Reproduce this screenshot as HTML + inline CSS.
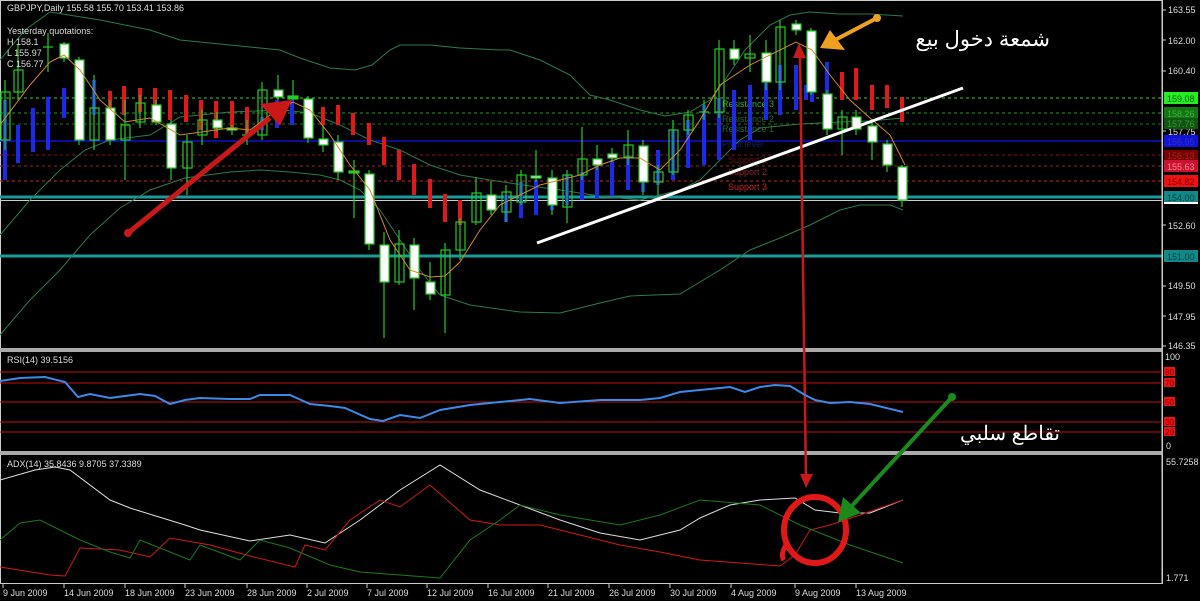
<!DOCTYPE html>
<html><head><meta charset="utf-8"><style>
html,body{margin:0;padding:0;background:#000;}
svg{display:block}
text{font-family:"Liberation Sans",sans-serif;font-size:9px;fill:#ddd}
</style></head><body>
<svg width="1200" height="601" viewBox="0 0 1200 601" xmlns="http://www.w3.org/2000/svg">
<rect width="1200" height="601" fill="#000"/>
<rect x="0.5" y="0.5" width="1162" height="583" fill="none" stroke="#ccc" stroke-width="1"/>
<rect x="0" y="348" width="1163" height="4" fill="#aaa"/>
<rect x="0" y="451" width="1163" height="4" fill="#aaa"/>

<line x1="0" y1="98" x2="1162" y2="98" stroke="#3c3" stroke-dasharray="3,3"/>
<line x1="0" y1="113" x2="1162" y2="113" stroke="#292" stroke-dasharray="3,3"/>
<line x1="0" y1="124" x2="1162" y2="124" stroke="#171" stroke-dasharray="3,3"/>
<line x1="0" y1="141" x2="1162" y2="141" stroke="#11c" stroke-width="1.5"/>
<line x1="0" y1="155" x2="1162" y2="155" stroke="#811" stroke-dasharray="3,3"/>
<line x1="0" y1="166" x2="1162" y2="166" stroke="#922" stroke-dasharray="3,3"/>
<line x1="0" y1="181" x2="1162" y2="181" stroke="#c22" stroke-dasharray="3,3"/>
<line x1="0" y1="197" x2="1162" y2="197" stroke="#1a9a9a" stroke-width="3"/>
<line x1="0" y1="200.5" x2="1162" y2="200.5" stroke="#ccc" stroke-width="1"/>
<line x1="0" y1="256" x2="1162" y2="256" stroke="#1a9a9a" stroke-width="3"/>
<text x="722" y="107" style="fill:#3a3;font-size:9px">Resistance 3</text>
<text x="722" y="122" style="fill:#262;font-size:9px">Resistance 2</text>
<text x="722" y="132" style="fill:#263;font-size:9px">Resistance 1</text>
<text x="722" y="147" style="fill:#126;font-size:9px">Pivot level</text>
<text x="728" y="163" style="fill:#611;font-size:9px">Support 1</text>
<text x="728" y="175" style="fill:#922;font-size:9px">Support 2</text>
<text x="728" y="190" style="fill:#c22;font-size:9px">Support 3</text>

<polyline fill="none" stroke="#2a7a4a" stroke-width="1" points="0,60 25,30 50,12 100,20 150,30 180,40 230,45 280,50 300,58 330,68 355,70 372,65 390,50 400,45 430,45 460,48 500,50 510,50 540,60 570,75 590,95 610,100 640,110 665,116 690,112 710,100 725,80 745,50 770,25 790,15 810,12 840,14 870,14 903,16"/>
<polyline fill="none" stroke="#2a7a4a" stroke-width="1" points="0,235 30,200 60,170 85,150 110,140 150,135 180,117 230,112 283,110 310,113 340,125 370,140 400,150 430,165 460,175 490,180 530,186 560,190 600,196 640,200 680,190 700,180 720,160 740,140 760,128 800,124 840,122 870,121 903,118"/>
<polyline fill="none" stroke="#2a7a4a" stroke-width="1" points="0,335 30,300 60,270 90,235 120,208 150,190 185,178 230,172 260,170 290,172 320,175 340,180 360,190 380,210 400,240 420,270 440,295 470,305 520,312 560,313 600,303 630,296 680,294 720,270 750,250 780,238 810,225 840,210 860,205 890,205 903,210"/>

<g stroke-width="4">
<g stroke="#1a2ae8">
<line x1="5" y1="100" x2="5" y2="180"/><line x1="18" y1="125" x2="18" y2="163"/><line x1="33" y1="108" x2="33" y2="152"/><line x1="48" y1="97" x2="48" y2="150"/><line x1="64" y1="88" x2="64" y2="118"/><line x1="79" y1="80" x2="79" y2="125"/><line x1="94" y1="80" x2="94" y2="115"/><line x1="262" y1="117" x2="262" y2="130"/><line x1="277" y1="100" x2="277" y2="128"/><line x1="292" y1="100" x2="292" y2="125"/><line x1="308" y1="100" x2="308" y2="122"/>
<line x1="506" y1="195" x2="506" y2="222"/><line x1="521" y1="182" x2="521" y2="218"/><line x1="536" y1="180" x2="536" y2="215"/><line x1="552" y1="180" x2="552" y2="210"/><line x1="567" y1="175" x2="567" y2="205"/><line x1="582" y1="172" x2="582" y2="200"/><line x1="597" y1="165" x2="597" y2="198"/><line x1="612" y1="160" x2="612" y2="196"/><line x1="628" y1="155" x2="628" y2="190"/><line x1="643" y1="150" x2="643" y2="192"/><line x1="658" y1="150" x2="658" y2="185"/><line x1="673" y1="130" x2="673" y2="180"/><line x1="688" y1="120" x2="688" y2="168"/><line x1="704" y1="105" x2="704" y2="165"/><line x1="719" y1="98" x2="719" y2="160"/><line x1="734" y1="90" x2="734" y2="150"/><line x1="750" y1="85" x2="750" y2="140"/><line x1="766" y1="82" x2="766" y2="120"/><line x1="780" y1="65" x2="780" y2="115"/><line x1="796" y1="65" x2="796" y2="110"/><line x1="806" y1="85" x2="806" y2="100"/><line x1="812" y1="88" x2="812" y2="102"/><line x1="827" y1="62" x2="827" y2="97"/>
</g>
<g stroke="#e01818">
<line x1="110" y1="91" x2="110" y2="110"/><line x1="124" y1="86" x2="124" y2="115"/><line x1="140" y1="88" x2="140" y2="112"/><line x1="155" y1="88" x2="155" y2="115"/><line x1="170" y1="90" x2="170" y2="120"/><line x1="186" y1="95" x2="186" y2="122"/><line x1="201" y1="100" x2="201" y2="130"/><line x1="216" y1="101" x2="216" y2="138"/><line x1="232" y1="101" x2="232" y2="128"/><line x1="247" y1="107" x2="247" y2="138"/>
<line x1="323" y1="107" x2="323" y2="125"/><line x1="338" y1="105" x2="338" y2="125"/><line x1="353" y1="113" x2="353" y2="135"/><line x1="369" y1="123" x2="369" y2="145"/><line x1="384" y1="137" x2="384" y2="165"/><line x1="399" y1="150" x2="399" y2="180"/><line x1="414" y1="164" x2="414" y2="195"/><line x1="430" y1="179" x2="430" y2="208"/><line x1="445" y1="194" x2="445" y2="222"/><line x1="460" y1="200" x2="460" y2="225"/>
<line x1="842" y1="72" x2="842" y2="100"/><line x1="856" y1="68" x2="856" y2="100"/><line x1="872" y1="85" x2="872" y2="110"/><line x1="887" y1="85" x2="887" y2="108"/><line x1="902" y1="97" x2="902" y2="122"/>
</g>
</g>

<g stroke="#2c2" stroke-width="1.2" fill="none">
<line x1="5" y1="80" x2="5" y2="150"/><rect x="1" y="92" width="9" height="48"/>
<line x1="18" y1="45" x2="18" y2="100"/><rect x="14" y="70" width="9" height="22"/>
<line x1="48" y1="33" x2="48" y2="72"/><line x1="43" y1="47" x2="53" y2="47"/>
<line x1="94" y1="75" x2="94" y2="150"/><rect x="90" y="108" width="9" height="32"/>
<line x1="125" y1="100" x2="125" y2="180"/><rect x="121" y="125" width="9" height="15"/>
<line x1="140" y1="95" x2="140" y2="128"/><rect x="136" y="103" width="9" height="19"/>
<line x1="187" y1="135" x2="187" y2="195"/><rect x="183" y="142" width="9" height="26"/>
<line x1="202" y1="110" x2="202" y2="145"/><rect x="198" y="120" width="9" height="15"/>
<line x1="247" y1="120" x2="247" y2="145"/><line x1="242" y1="135" x2="252" y2="135"/>
<line x1="262" y1="82" x2="262" y2="140"/><rect x="258" y="90" width="9" height="45"/>
<line x1="293" y1="80" x2="293" y2="100"/><rect x="288" y="96" width="10" height="3" fill="#2c2"/>
<line x1="354" y1="160" x2="354" y2="218"/><rect x="349" y="171" width="10" height="2" fill="#2c2"/>
<line x1="399" y1="230" x2="399" y2="285"/><rect x="395" y="244" width="9" height="38"/>
<line x1="445" y1="243" x2="445" y2="333"/><rect x="441" y="250" width="9" height="45"/>
<line x1="460" y1="218" x2="460" y2="260"/><rect x="456" y="222" width="9" height="28"/>
<line x1="476" y1="177" x2="476" y2="225"/><rect x="472" y="193" width="9" height="29"/>
<line x1="506" y1="185" x2="506" y2="222"/><rect x="502" y="192" width="9" height="20"/>
<line x1="521" y1="170" x2="521" y2="205"/><rect x="517" y="175" width="9" height="27"/>
<line x1="567" y1="170" x2="567" y2="223"/><rect x="563" y="175" width="9" height="32"/>
<line x1="582" y1="127" x2="582" y2="180"/><rect x="578" y="159" width="9" height="16"/>
<line x1="628" y1="130" x2="628" y2="165"/><rect x="624" y="145" width="9" height="12"/>
<line x1="658" y1="165" x2="658" y2="195"/><rect x="654" y="172" width="9" height="10"/>
<line x1="673" y1="120" x2="673" y2="175"/><rect x="669" y="130" width="9" height="42"/>
<line x1="688" y1="110" x2="688" y2="135"/><rect x="684" y="115" width="9" height="15"/>
<line x1="704" y1="100" x2="704" y2="120"/><line x1="699" y1="112" x2="709" y2="112"/>
<line x1="719" y1="40" x2="719" y2="118"/><rect x="715" y="49" width="9" height="63"/>
<line x1="750" y1="35" x2="750" y2="72"/><rect x="745" y="54" width="10" height="4"/>
<line x1="780" y1="20" x2="780" y2="90"/><rect x="776" y="27" width="9" height="55"/>
<line x1="842" y1="110" x2="842" y2="155"/><rect x="838" y="117" width="9" height="12"/>
</g>
<g stroke="#2c2" stroke-width="1.2" fill="#fff">
<line x1="64" y1="42" x2="64" y2="62"/><rect x="60" y="44" width="9" height="14"/>
<line x1="79" y1="57" x2="79" y2="145"/><rect x="75" y="60" width="9" height="80"/>
<line x1="110" y1="100" x2="110" y2="145"/><rect x="106" y="108" width="9" height="32"/>
<line x1="156" y1="100" x2="156" y2="125"/><rect x="152" y="105" width="9" height="17"/>
<line x1="171" y1="120" x2="171" y2="180"/><rect x="167" y="124" width="9" height="44"/>
<line x1="217" y1="112" x2="217" y2="132"/><rect x="213" y="120" width="9" height="8"/>
<line x1="232" y1="125" x2="232" y2="135"/><rect x="227" y="128" width="10" height="2"/>
<line x1="278" y1="75" x2="278" y2="100"/><rect x="274" y="90" width="9" height="7"/>
<line x1="308" y1="96" x2="308" y2="143"/><rect x="304" y="99" width="9" height="39"/>
<line x1="323" y1="125" x2="323" y2="152"/><rect x="319" y="139" width="9" height="6"/>
<line x1="338" y1="135" x2="338" y2="180"/><rect x="334" y="142" width="9" height="30"/>
<line x1="369" y1="170" x2="369" y2="250"/><rect x="365" y="174" width="9" height="70"/>
<line x1="384" y1="232" x2="384" y2="338"/><rect x="380" y="245" width="9" height="37"/>
<line x1="414" y1="238" x2="414" y2="310"/><rect x="410" y="245" width="9" height="33"/>
<line x1="430" y1="262" x2="430" y2="300"/><rect x="426" y="282" width="9" height="12"/>
<line x1="491" y1="181" x2="491" y2="215"/><rect x="487" y="195" width="9" height="15"/>
<line x1="536" y1="150" x2="536" y2="182"/><rect x="531" y="176" width="10" height="2"/>
<line x1="552" y1="170" x2="552" y2="215"/><rect x="548" y="178" width="9" height="27"/>
<line x1="597" y1="145" x2="597" y2="170"/><rect x="593" y="159" width="9" height="6"/>
<line x1="612" y1="148" x2="612" y2="162"/><rect x="608" y="154" width="9" height="4"/>
<line x1="643" y1="140" x2="643" y2="195"/><rect x="639" y="146" width="9" height="36"/>
<line x1="734" y1="40" x2="734" y2="65"/><rect x="730" y="49" width="9" height="10"/>
<line x1="766" y1="40" x2="766" y2="90"/><rect x="762" y="53" width="9" height="29"/>
<line x1="796" y1="20" x2="796" y2="35"/><rect x="792" y="24" width="9" height="6"/>
<line x1="811" y1="28" x2="811" y2="95"/><rect x="807" y="31" width="9" height="61"/>
<line x1="827" y1="90" x2="827" y2="135"/><rect x="823" y="94" width="9" height="35"/>
<line x1="856" y1="110" x2="856" y2="135"/><rect x="852" y="117" width="9" height="12"/>
<line x1="872" y1="122" x2="872" y2="160"/><rect x="868" y="126" width="9" height="16"/>
<line x1="887" y1="140" x2="887" y2="172"/><rect x="883" y="144" width="9" height="21"/>
<line x1="902" y1="165" x2="902" y2="207"/><rect x="898" y="167" width="9" height="33"/>
</g>

<polyline fill="none" stroke="#d08a20" stroke-width="1" points="0,125 30,85 50,62 64,55 80,70 100,100 125,122 150,118 180,135 230,128 250,130 270,115 293,102 310,110 330,135 350,165 370,190 390,240 410,270 430,277 445,276 460,262 480,230 500,205 520,195 540,185 560,180 580,175 600,165 620,158 640,158 660,170 680,150 700,120 720,85 750,65 770,55 796,42 812,50 830,75 850,100 870,118 890,135 905,165"/>

<line x1="537" y1="243" x2="963" y2="88" stroke="#fff" stroke-width="3"/>

<line x1="128" y1="233" x2="270" y2="118" stroke="#c81818" stroke-width="5"/>
<circle cx="128" cy="233" r="4" fill="#c81818"/>
<polygon points="292,100 260,104 280,126" fill="#c81818"/>

<line x1="877" y1="18" x2="835" y2="40" stroke="#f0a020" stroke-width="4"/>
<circle cx="877" cy="18" r="4" fill="#f0a020"/>
<polygon points="820,48 830,30 845,50" fill="#f0a020"/>

<line x1="800" y1="55" x2="806" y2="480" stroke="#c81818" stroke-width="2.5"/>
<polygon points="799,43 793,58 806,58" fill="#c81818"/>
<polygon points="806,488 800,474 813,474" fill="#c81818"/>

<text x="1050" y="46" text-anchor="end" style="font-family:'Liberation Sans','Noto Sans CJK SC',sans-serif;font-size:21px;fill:#fff">شمعة دخول بيع</text>

<g>
<line x1="1162" y1="0" x2="1162" y2="584" stroke="#ccc"/>
<g stroke="#ccc"><line x1="1162" y1="10" x2="1166" y2="10"/><line x1="1162" y1="40" x2="1166" y2="40"/><line x1="1162" y1="71" x2="1166" y2="71"/><line x1="1162" y1="131" x2="1166" y2="131"/><line x1="1162" y1="225" x2="1166" y2="225"/><line x1="1162" y1="286" x2="1166" y2="286"/><line x1="1162" y1="316" x2="1166" y2="316"/><line x1="1162" y1="346" x2="1166" y2="346"/></g>
<text x="1168" y="13">163.55</text><text x="1168" y="44">162.00</text><text x="1168" y="74">160.40</text><text x="1168" y="135">157.75</text><text x="1168" y="229">152.60</text><text x="1168" y="289">149.50</text><text x="1168" y="320">147.95</text><text x="1168" y="349">146.35</text>
<rect x="1164" y="92" width="34" height="12" fill="#2e2"/><text x="1167" y="102" style="fill:#060">159.08</text>
<rect x="1164" y="107" width="34" height="12" fill="#171"/><text x="1167" y="117" style="fill:#4a4">158.26</text>
<rect x="1164" y="118" width="34" height="11" fill="#151"/><text x="1167" y="127" style="fill:#393">157.76</text>
<rect x="1164" y="135" width="34" height="12" fill="#11d"/><text x="1167" y="145" style="fill:#33a">156.95</text>
<rect x="1164" y="150" width="34" height="11" fill="#700"/><text x="1167" y="159" style="fill:#a22">156.13</text>
<rect x="1164" y="160" width="34" height="12" fill="#c13"/><text x="1167" y="170" style="fill:#f88">155.63</text>
<rect x="1164" y="175" width="34" height="12" fill="#e11"/><text x="1167" y="185" style="fill:#800">154.82</text>
<rect x="1164" y="191" width="34" height="12" fill="#188"/><text x="1167" y="201" style="fill:#044">154.00</text>
<rect x="1164" y="202" width="34" height="2" fill="#fff"/>
<rect x="1164" y="250" width="34" height="12" fill="#188"/><text x="1167" y="260" style="fill:#044">151.00</text>
</g>

<text x="7" y="11">GBPJPY,Daily  155.58 155.70 153.41 153.86</text>
<text x="7" y="34">Yesterday quotations:</text>
<text x="7" y="45">H 158.1</text>
<text x="7" y="56">L 155.97</text>
<text x="7" y="67">C 156.77</text>

<g stroke="#c01010" stroke-width="1">
<line x1="0" y1="372" x2="1162" y2="372"/><line x1="0" y1="383" x2="1162" y2="383"/><line x1="0" y1="402" x2="1162" y2="402"/><line x1="0" y1="422" x2="1162" y2="422"/><line x1="0" y1="432" x2="1162" y2="432"/>
</g>
<polyline fill="none" stroke="#3a8ae8" stroke-width="2" points="0,381 20,378 45,377 65,382 78,397 90,394 110,398 125,396 140,394 155,396 170,404 185,400 200,398 230,399 250,399 260,395 290,395 310,404 330,406 345,408 370,419 383,421 400,415 420,418 440,410 470,405 500,402 530,399 560,403 600,400 640,400 660,398 680,392 700,390 730,387 745,392 760,387 775,385 790,386 805,395 815,400 830,403 850,402 870,404 903,412"/>
<text x="7" y="363">RSI(14) 39.5156</text>
<text x="1165" y="360">100</text><text x="1166" y="449">0</text>
<g>
<rect x="1164" y="367" width="11" height="9" fill="#e11"/><text x="1165" y="375" style="fill:#700;font-size:8px">80</text>
<rect x="1164" y="378" width="11" height="9" fill="#e11"/><text x="1165" y="386" style="fill:#700;font-size:8px">70</text>
<rect x="1164" y="397" width="11" height="9" fill="#e11"/><text x="1165" y="405" style="fill:#700;font-size:8px">50</text>
<rect x="1164" y="417" width="11" height="9" fill="#e11"/><text x="1165" y="425" style="fill:#700;font-size:8px">30</text>
<rect x="1164" y="427" width="11" height="9" fill="#e11"/><text x="1165" y="435" style="fill:#700;font-size:8px">20</text>
</g>

<text x="7" y="467">ADX(14) 35.8436 9.8705 37.3389</text>
<text x="1166" y="465">55.7258</text><text x="1166" y="581">1.771</text>
<polyline fill="none" stroke="#ddd" stroke-width="1" points="0,480 35,470 55,467 70,470 110,500 130,508 185,525 200,530 250,541 290,535 325,543 360,520 400,490 440,465 480,490 520,505 560,520 600,533 640,540 680,530 700,518 730,505 760,500 795,498 815,510 840,513 870,513 903,500"/>
<polyline fill="none" stroke="#d01818" stroke-width="1" points="0,567 50,575 65,576 80,548 120,550 150,557 170,538 210,545 250,556 295,567 305,545 325,550 350,520 380,500 400,507 430,485 470,520 500,525 540,525 580,535 620,545 660,552 700,560 740,563 780,566 795,555 810,530 830,525 860,515 903,500"/>
<polyline fill="none" stroke="#1a7a1a" stroke-width="1" points="0,540 20,523 40,520 80,540 110,552 130,558 140,540 190,560 200,545 240,560 260,540 290,548 330,565 360,572 400,575 440,578 470,540 500,520 520,505 560,515 620,525 660,515 700,500 760,505 800,525 850,545 903,563"/>
<ellipse cx="815" cy="530" rx="31" ry="33" fill="none" stroke="#e01818" stroke-width="6"/>
<path d="M786 545 Q780 555 784 560" fill="none" stroke="#e01818" stroke-width="5"/>
<line x1="952" y1="397" x2="850" y2="508" stroke="#1a8a1a" stroke-width="4"/>
<circle cx="952" cy="397" r="4" fill="#1a8a1a"/>
<polygon points="838,522 843,497 861,513" fill="#1a8a1a"/>
<text x="1060" y="440" text-anchor="end" style="font-family:'Liberation Sans','Noto Sans CJK SC',sans-serif;font-size:20px;fill:#fff">تقاطع سلبي</text>

<g stroke="#ccc"><line x1="3" y1="584" x2="3" y2="588"/><line x1="64" y1="584" x2="64" y2="588"/><line x1="125" y1="584" x2="125" y2="588"/><line x1="185" y1="584" x2="185" y2="588"/><line x1="247" y1="584" x2="247" y2="588"/><line x1="307" y1="584" x2="307" y2="588"/><line x1="367" y1="584" x2="367" y2="588"/><line x1="427" y1="584" x2="427" y2="588"/><line x1="488" y1="584" x2="488" y2="588"/><line x1="548" y1="584" x2="548" y2="588"/><line x1="609" y1="584" x2="609" y2="588"/><line x1="670" y1="584" x2="670" y2="588"/><line x1="731" y1="584" x2="731" y2="588"/><line x1="795" y1="584" x2="795" y2="588"/><line x1="856" y1="584" x2="856" y2="588"/></g>
<g>
<text x="3" y="596">9 Jun 2009</text><text x="64" y="596">14 Jun 2009</text><text x="125" y="596">18 Jun 2009</text><text x="185" y="596">23 Jun 2009</text><text x="247" y="596">28 Jun 2009</text><text x="307" y="596">2 Jul 2009</text><text x="367" y="596">7 Jul 2009</text><text x="427" y="596">12 Jul 2009</text><text x="488" y="596">16 Jul 2009</text><text x="548" y="596">21 Jul 2009</text><text x="609" y="596">26 Jul 2009</text><text x="670" y="596">30 Jul 2009</text><text x="731" y="596">4 Aug 2009</text><text x="795" y="596">9 Aug 2009</text><text x="856" y="596">13 Aug 2009</text>
</g>
</svg>
</body></html>
